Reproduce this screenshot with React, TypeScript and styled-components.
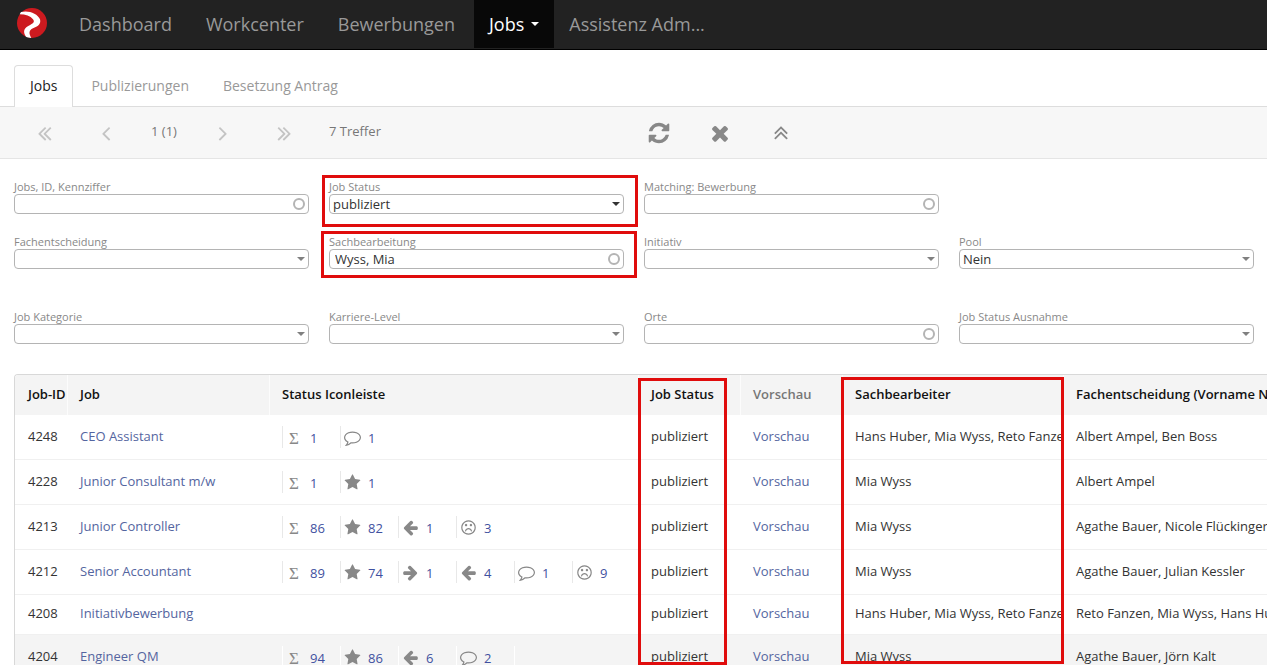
import React from "react";
import styled, { createGlobalStyle, css } from "styled-components";

const GlobalStyle = createGlobalStyle`
  *, *::before, *::after { box-sizing: border-box; }
  body {
    margin: 0;
    background: #fff;
    color: #333;
    font-family: "Open Sans", "Noto Sans", sans-serif;
    font-size: 13px;
    line-height: 18px;
  }
  button, input, select { font: inherit; color: inherit; }
  a { text-decoration: none; }
`;

const Page = styled.div`
  display: flex;
  flex-direction: column;
  height: 100vh;
  overflow: hidden;
`;

/* ---------- icons ---------- */

const paths = {
  refresh:
    "M1639 1056q0 5-1 7-64 268-268 434.5t-478 166.5q-146 0-282.5-55t-243.5-157l-129 129q-19 19-45 19t-45-19-19-45v-448q0-26 19-45t45-19h448q26 0 45 19t19 45-19 45l-137 137q71 66 161 102t187 36q134 0 250-65t186-179q11-17 53-117 8-23 30-23h192q13 0 22.5 9.5t9.5 22.5zm25-800v448q0 26-19 45t-45 19h-448q-26 0-45-19t-19-45 19-45l138-138q-148-137-349-137-134 0-250 65t-186 179q-11 17-53 117-8 23-30 23h-199q-13 0-22.5-9.5t-9.5-22.5v-7q65-268 270-434.5t480-166.5q146 0 284 55.5t245 156.5l130-129q19-19 45-19t45 19 19 45z",
  times:
    "M1490 1322q0 40-28 68l-136 136q-28 28-68 28t-68-28l-294-294-294 294q-28 28-68 28t-68-28l-136-136q-28-28-28-68t28-68l294-294-294-294q-28-28-28-68t28-68l136-136q28-28 68-28t68 28l294 294 294-294q28-28 68-28t68 28l136 136q28 28 28 68t-28 68l-294 294 294 294q28 28 28 68z",
  star:
    "M1728 647q0 22-26 48l-363 354 86 500q1 7 1 20 0 21-10.5 35.5t-30.5 14.5q-19 0-40-12l-449-236-449 236q-22 12-40 12-21 0-31.5-14.5t-10.5-35.5q0-6 2-20l86-500-364-354q-25-27-25-48 0-37 56-46l502-73 225-455q19-41 49-41t49 41l225 455 502 73q56 9 56 46z",
  left:
    "M1664 896v128q0 53-32.5 90.5t-84.5 37.5h-704l293 294q38 36 38 90t-38 90l-75 76q-37 37-90 37-52 0-91-37l-651-652q-37-37-37-90 0-52 37-91l651-650q38-38 91-38 52 0 90 38l75 74q38 38 38 91t-38 91l-293 293h704q52 0 84.5 37.5t32.5 90.5z",
  comment:
    "M896 384q-204 0-381.5 69.5t-282 187.5-104.5 255q0 112 71.5 213.5t201.5 175.5l87 50-27 96q-24 91-70 172 152-63 275-171l43-38 57 6q69 8 130 8 204 0 381.5-69.5t282-187.5 104.5-255-104.5-255-282-187.5-381.5-69.5zm896 512q0 174-120 321.5t-326 233-450 85.5q-70 0-145-8-198 175-460 242-49 14-114 22h-5q-15 0-27-10.5t-16-27.5v-1q-3-4-.5-12t2-10 4.5-9.5l6-9 7-8.5 8-9q7-8 31-34.5t34.5-38 31-39.5 32.5-51 27-59 26-76q-157-89-247.5-220t-90.5-281q0-174 120-321.5t326-233 450-85.5 450 85.5 326 233 120 321.5z",
  frown:
    "M1262 1229q8 25-4 48.5t-37 31.5-49-4-32-38q-25-80-92.5-129.5t-151.5-49.5-151.5 49.5-92.5 129.5q-8 26-31.5 38t-48.5 4q-26-8-38-31.5t-4-48.5q37-121 138-195t228-74 228 74 138 195zm-494-589q0 53-37.5 90.5t-90.5 37.5-90.5-37.5-37.5-90.5 37.5-90.5 90.5-37.5 90.5 37.5 37.5 90.5zm512 0q0 53-37.5 90.5t-90.5 37.5-90.5-37.5-37.5-90.5 37.5-90.5 90.5-37.5 90.5 37.5 37.5 90.5zm256 256q0-130-51-248.5t-136.5-204-204-136.5-248.5-51-248.5 51-204 136.5-136.5 204-51 248.5 51 248.5 136.5 204 204 136.5 248.5 51 248.5-51 204-136.5 136.5-204 51-248.5zm128 0q0 209-103 385.5t-279.5 279.5-385.5 103-385.5-103-279.5-279.5-103-385.5 103-385.5 279.5-279.5 385.5-103 385.5 103 279.5 279.5 103 385.5z",
  angle:
    "M1203 544q0 13-10 23l-393 393 393 393q10 10 10 23t-10 23l-50 50q-10 10-23 10t-23-10l-466-466q-10-10-10-23t10-23l466-466q10-10 23-10t23 10l50 50q10 10 10 23z",
};

type IconName =
  | "refresh" | "times" | "star" | "left" | "right" | "comment" | "frown"
  | "prev" | "next" | "first" | "last" | "up";

const doubleAngle = (
  <>
    <path transform="translate(-220 0)" d={paths.angle} />
    <path transform="translate(164 0)" d={paths.angle} />
  </>
);

const shapes: Record<IconName, React.ReactNode> = {
  refresh: <path d={paths.refresh} />,
  times: <path d={paths.times} />,
  star: <path d={paths.star} />,
  left: <path d={paths.left} />,
  right: <path transform="translate(1792 0) scale(-1 1)" d={paths.left} />,
  comment: <path d={paths.comment} />,
  frown: <path d={paths.frown} />,
  prev: <path d={paths.angle} />,
  next: <path transform="translate(1792 0) scale(-1 1)" d={paths.angle} />,
  first: doubleAngle,
  last: <g transform="translate(1792 0) scale(-1 1)">{doubleAngle}</g>,
  up: <g transform="rotate(90 928 928)">{doubleAngle}</g>,
};

function Icon({ name, size }: { name: IconName; size: number }) {
  return (
    <svg width={size} height={size} viewBox="0 0 1792 1792" fill="currentColor" aria-hidden="true">
      {shapes[name]}
    </svg>
  );
}

/* ---------- main navigation ---------- */

const NavBar = styled.header`
  display: flex;
  flex: none;
  height: 50px;
  background: #222;
  border-bottom: 1px solid #000;
`;

const Brand = styled.a`
  display: flex;
  padding: 8px 17px;
`;

const NavLink = styled.a<{ $active?: boolean }>`
  display: flex;
  align-items: center;
  height: 48px;
  margin-right: 4px;
  padding: 0 15px;
  font-size: 18px;
  line-height: 24px;
  white-space: nowrap;
  color: #999;
  ${(p) =>
    p.$active &&
    css`
      margin-right: 0;
      color: #fff;
      background: #080808;
    `}
`;

const NavCaret = styled.span`
  margin-left: 7px;
  border: 4px solid transparent;
  border-top-color: #fff;
  border-bottom: 0;
`;

/* ---------- tabs ---------- */

const Tabs = styled.nav`
  display: flex;
  flex: none;
  gap: 2px;
  padding: 15px 14px 0;
  border-bottom: 1px solid #ddd;
`;

const Tab = styled.a<{ $active?: boolean }>`
  padding: 10px 15px;
  border: 1px solid transparent;
  border-bottom: 0;
  border-radius: 4px 4px 0 0;
  font-size: 14px;
  line-height: 20px;
  color: #999;
  ${(p) =>
    p.$active &&
    css`
      margin-bottom: -1px;
      padding-bottom: 11px;
      border-color: #ddd;
      color: #222;
      background: #fff;
    `}
`;

/* ---------- toolbar ---------- */

const Toolbar = styled.div`
  display: flex;
  flex: none;
  align-items: center;
  height: 52px;
  padding: 0 14px;
  background: #f7f7f7;
  border-bottom: 1px solid #e5e5e5;
`;

const ToolButton = styled.button<{ $muted?: boolean }>`
  display: flex;
  justify-content: center;
  width: 61px;
  padding: 1px 0 0;
  border: 0;
  background: none;
  color: ${(p) => (p.$muted ? "#c4c4c4" : "#888")};
`;

const PageInfo = styled.span`
  width: 56px;
  padding-bottom: 4px;
  text-align: center;
  color: #777;
`;

const HitCount = styled.span`
  width: 314px;
  padding: 0 0 4px 15px;
  color: #777;
`;

/* ---------- filters ---------- */

const Filters = styled.form`
  display: flex;
  flex: none;
  flex-direction: column;
  gap: 41px;
  padding: 21px 13px 30px 14px;
`;

const FilterGrid = styled.div`
  display: grid;
  grid-template-columns: repeat(4, 1fr);
  gap: 21px 20px;
`;

const Field = styled.div<{ $column?: number }>`
  position: relative;
  grid-column: ${(p) => p.$column ?? "auto"};
`;

const FieldLabel = styled.label`
  display: block;
  font-size: 11px;
  line-height: 14px;
  color: #888;
`;

const Control = styled.div`
  position: relative;
  display: flex;
  align-items: center;
  height: 20px;
  border: 1px solid #b4b4b4;
  border-radius: 4px;
  color: #333;
`;

const TextInput = styled.input`
  flex: 1;
  min-width: 0;
  height: 18px;
  padding: 0 5px;
  border: 0;
  outline: 0;
  background: none;
`;

const Ring = styled.span`
  width: 12px;
  height: 12px;
  margin-right: 3px;
  border: 2px solid #b4b4b4;
  border-radius: 50%;
`;

const Select = styled.select`
  flex: 1;
  min-width: 0;
  height: 18px;
  padding: 0 20px 0 3px;
  border: 0;
  outline: 0;
  background: none;
  appearance: none;
`;

const SelectCaret = styled.span<{ $dark?: boolean }>`
  position: absolute;
  right: 3px;
  top: 7px;
  border: 4px solid transparent;
  border-top-color: ${(p) => (p.$dark ? "#333" : "#808080")};
  border-bottom: 0;
  pointer-events: none;
`;

const Marker = styled.div`
  position: absolute;
  border: 3px solid #e00c0c;
  pointer-events: none;
`;

const StatusMarker = styled(Marker)`
  inset: -5px -14px -13px -7px;
`;

const ClerkMarker = styled(Marker)`
  inset: -4px -13px -9px -8px;
`;

type FieldSpec = {
  id: string;
  label: string;
  kind: "text" | "select";
  value?: string;
  column?: number;
  dark?: boolean;
  marker?: React.ReactNode;
};

function FilterField({ id, label, kind, value = "", column, dark, marker }: FieldSpec) {
  return (
    <Field $column={column}>
      <FieldLabel htmlFor={id}>{label}</FieldLabel>
      <Control>
        {kind === "text" ? (
          <>
            <TextInput id={id} type="text" defaultValue={value} />
            <Ring />
          </>
        ) : (
          <>
            <Select id={id} defaultValue={value}>
              <option value={value}>{value}</option>
            </Select>
            <SelectCaret $dark={dark} />
          </>
        )}
      </Control>
      {marker}
    </Field>
  );
}

const mainFilters: FieldSpec[] = [
  { id: "jobs", label: "Jobs, ID, Kennziffer", kind: "text" },
  { id: "status", label: "Job Status", kind: "select", value: "publiziert", dark: true, marker: <StatusMarker /> },
  { id: "matching", label: "Matching: Bewerbung", kind: "text" },
  { id: "decision", label: "Fachentscheidung", kind: "select", column: 1 },
  { id: "clerk", label: "Sachbearbeitung", kind: "text", value: "Wyss, Mia", marker: <ClerkMarker /> },
  { id: "initiative", label: "Initiativ", kind: "select" },
  { id: "pool", label: "Pool", kind: "select", value: "Nein" },
];

const extraFilters: FieldSpec[] = [
  { id: "category", label: "Job Kategorie", kind: "select" },
  { id: "career", label: "Karriere-Level", kind: "select" },
  { id: "places", label: "Orte", kind: "text" },
  { id: "exception", label: "Job Status Ausnahme", kind: "select" },
];

/* ---------- result table ---------- */

const TableArea = styled.main`
  position: relative;
  flex: 1;
  min-height: 0;
  margin-left: 14px;
  overflow: hidden;
  border: 1px solid #d8d8d8;
  border-width: 1px 0 0 1px;
  border-radius: 4px 0 0 0;
`;

const Table = styled.table`
  width: 1348px;
  table-layout: fixed;
  border-collapse: separate;
  border-spacing: 0;
`;

const Th = styled.th<{ $muted?: boolean }>`
  height: 40px;
  padding: 0 0 3px 12px;
  border-left: 1px solid #fcfcfc;
  text-align: left;
  font-weight: 600;
  white-space: nowrap;
  color: ${(p) => (p.$muted ? "#777" : "#111")};
  background: #f4f4f4;
  &:first-child { border-left-color: #f4f4f4; }
`;

const Td = styled.td`
  padding: 9px 0 11px 13px;
  border-bottom: 1px solid #f0f0f0;
  overflow: hidden;
  line-height: 19px;
  white-space: nowrap;
  vertical-align: middle;
`;

const CellLink = styled.a`
  color: #5465a0;
`;

const StatusList = styled.div`
  display: flex;
  height: 24px;
  padding-top: 2px;
`;

const StatusItem = styled.a`
  display: flex;
  align-items: center;
  width: 58px;
  border-left: 1px solid #e8e8e8;
  color: #3f51a0;
`;

const Tr = styled.tr<{ $shaded?: boolean }>`
  background: ${(p) => (p.$shaded ? "#f4f4f4" : "#fff")};
  ${(p) =>
    p.$shaded &&
    css`
      ${StatusItem} { border-left-color: #fff; }
      ${StatusItem}:last-child {
        width: 59px;
        border-right: 1px solid #fff;
      }
    `}
`;

const StatusIcon = styled.span`
  display: flex;
  justify-content: center;
  width: 22px;
  margin-right: 5px;
  color: #888;
`;

const Sigma = styled.span`
  padding-top: 2px;
  font-family: "Liberation Serif", serif;
  font-size: 17px;
`;

const Count = styled.span`
  padding-top: 2px;
`;

const ColumnMarker = styled(Marker)<{ $left: number; $width: number; $top: number; $bottom: number }>`
  top: ${(p) => p.$top}px;
  bottom: ${(p) => p.$bottom}px;
  left: ${(p) => p.$left}px;
  width: ${(p) => p.$width}px;
`;

type Status = [icon: IconName | "sum", count: number];
type Job = { id: number; title: string; statuses: Status[]; clerks: string; decision: string; shaded?: boolean };

const jobs: Job[] = [
  { id: 4248, title: "CEO Assistant", statuses: [["sum", 1], ["comment", 1]], clerks: "Hans Huber, Mia Wyss, Reto Fanzen", decision: "Albert Ampel, Ben Boss" },
  { id: 4228, title: "Junior Consultant m/w", statuses: [["sum", 1], ["star", 1]], clerks: "Mia Wyss", decision: "Albert Ampel" },
  { id: 4213, title: "Junior Controller", statuses: [["sum", 86], ["star", 82], ["left", 1], ["frown", 3]], clerks: "Mia Wyss", decision: "Agathe Bauer, Nicole Flückinger" },
  { id: 4212, title: "Senior Accountant", statuses: [["sum", 89], ["star", 74], ["right", 1], ["left", 4], ["comment", 1], ["frown", 9]], clerks: "Mia Wyss", decision: "Agathe Bauer, Julian Kessler" },
  { id: 4208, title: "Initiativbewerbung", statuses: [], clerks: "Hans Huber, Mia Wyss, Reto Fanzen", decision: "Reto Fanzen, Mia Wyss, Hans Huber" },
  { id: 4204, title: "Engineer QM", statuses: [["sum", 94], ["star", 86], ["left", 6], ["comment", 2]], clerks: "Mia Wyss", decision: "Agathe Bauer, Jörn Kalt", shaded: true },
];

const columnWidths = [52, 202, 369, 102, 102, 221, 300];

export default function App() {
  return (
    <>
      <GlobalStyle />
      <Page>
        <NavBar>
          <Brand href="#" aria-label="Startseite">
            <svg width="30" height="30" viewBox="0 0 90 90" aria-hidden="true">
              <circle cx="45" cy="45" r="45" fill="#cc1a1f" />
              <path
                d="M12 12C34 6 62 16 69 34C73 48 62 56 48 61C35 67 35 77 43 90C36 89 31 88 27 86C16 70 22 59 38 52C49 46 54 42 48 34C40 24 26 19 8 19Z"
                fill="#fff"
              />
            </svg>
          </Brand>
          <NavLink href="#">Dashboard</NavLink>
          <NavLink href="#">Workcenter</NavLink>
          <NavLink href="#">Bewerbungen</NavLink>
          <NavLink href="#" $active>
            Jobs
            <NavCaret />
          </NavLink>
          <NavLink href="#">Assistenz Adm...</NavLink>
        </NavBar>

        <Tabs>
          <Tab href="#" $active>Jobs</Tab>
          <Tab href="#">Publizierungen</Tab>
          <Tab href="#">Besetzung Antrag</Tab>
        </Tabs>

        <Toolbar>
          <ToolButton $muted aria-label="Erste Seite"><Icon name="first" size={24} /></ToolButton>
          <ToolButton $muted aria-label="Vorherige Seite"><Icon name="prev" size={24} /></ToolButton>
          <PageInfo>1 (1)</PageInfo>
          <ToolButton $muted aria-label="Nächste Seite"><Icon name="next" size={24} /></ToolButton>
          <ToolButton $muted aria-label="Letzte Seite"><Icon name="last" size={24} /></ToolButton>
          <HitCount>7 Treffer</HitCount>
          <ToolButton aria-label="Aktualisieren"><Icon name="refresh" size={24} /></ToolButton>
          <ToolButton aria-label="Zurücksetzen"><Icon name="times" size={24} /></ToolButton>
          <ToolButton aria-label="Einklappen"><Icon name="up" size={24} /></ToolButton>
        </Toolbar>

        <Filters>
          <FilterGrid>
            {mainFilters.map((f) => <FilterField key={f.id} {...f} />)}
          </FilterGrid>
          <FilterGrid>
            {extraFilters.map((f) => <FilterField key={f.id} {...f} />)}
          </FilterGrid>
        </Filters>

        <TableArea>
          <Table>
            <colgroup>
              {columnWidths.map((w, i) => <col key={i} width={w} />)}
            </colgroup>
            <thead>
              <tr>
                <Th>Job-ID</Th>
                <Th>Job</Th>
                <Th>Status Iconleiste</Th>
                <Th>Job Status</Th>
                <Th $muted>Vorschau</Th>
                <Th>Sachbearbeiter</Th>
                <Th>Fachentscheidung (Vorname Name)</Th>
              </tr>
            </thead>
            <tbody>
              {jobs.map((job) => (
                <Tr key={job.id} $shaded={job.shaded}>
                  <Td>{job.id}</Td>
                  <Td><CellLink href="#">{job.title}</CellLink></Td>
                  <Td>
                    {job.statuses.length > 0 && (
                      <StatusList>
                        {job.statuses.map(([icon, count]) => (
                          <StatusItem key={icon} href="#">
                            <StatusIcon>
                              {icon === "sum" ? <Sigma>Σ</Sigma> : <Icon name={icon} size={17} />}
                            </StatusIcon>
                            <Count>{count}</Count>
                          </StatusItem>
                        ))}
                      </StatusList>
                    )}
                  </Td>
                  <Td>publiziert</Td>
                  <Td><CellLink href="#">Vorschau</CellLink></Td>
                  <Td>{job.clerks}</Td>
                  <Td>{job.decision}</Td>
                </Tr>
              ))}
            </tbody>
          </Table>
          <ColumnMarker $left={623} $width={89} $top={3} $bottom={0} />
          <ColumnMarker $left={826} $width={223} $top={2} $bottom={1} />
        </TableArea>
      </Page>
    </>
  );
}
